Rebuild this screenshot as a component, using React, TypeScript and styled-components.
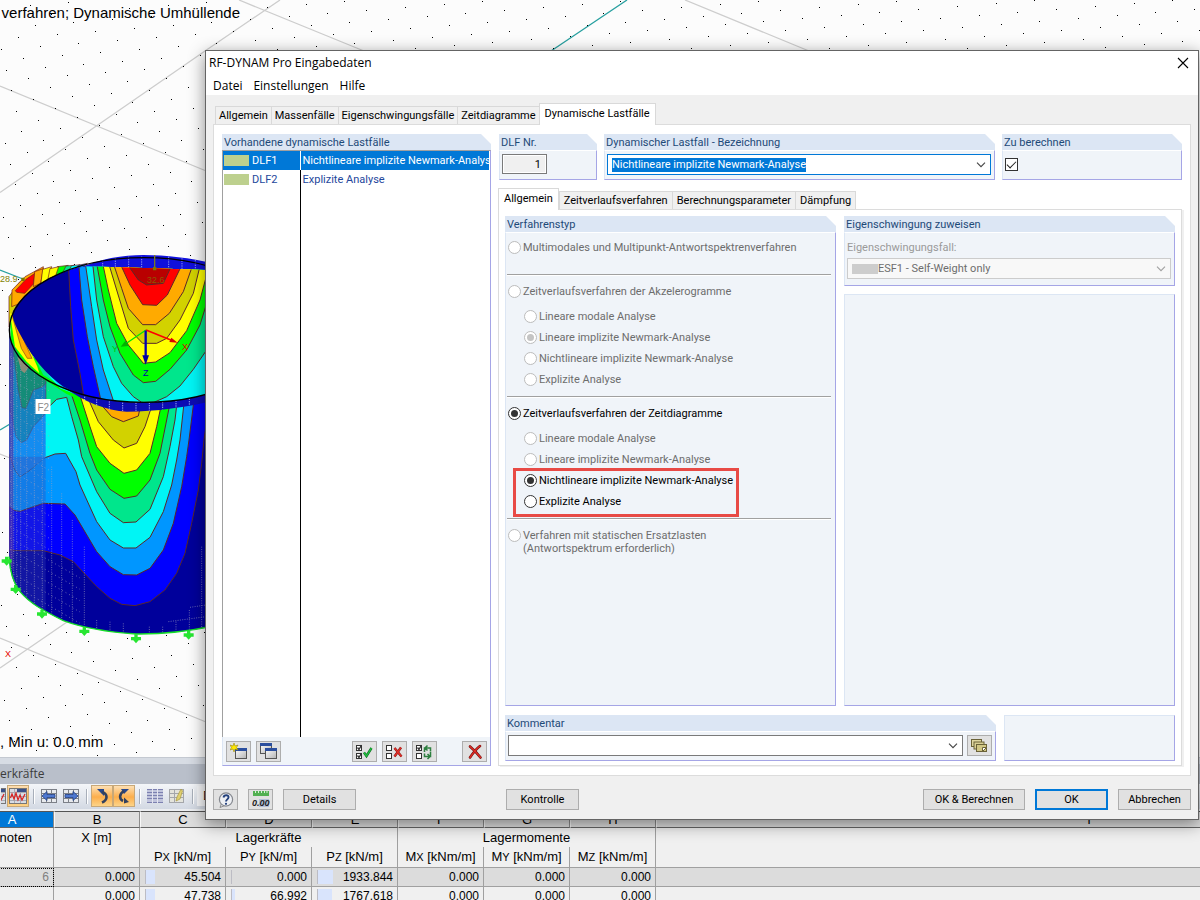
import React from "react";
import styled, { createGlobalStyle, css } from "styled-components";

const UI = `Roboto, "Open Sans", sans-serif`;
const ARIAL = `"Liberation Sans", Arial, sans-serif`;

const GlobalStyle = createGlobalStyle`
  *, *::before, *::after { box-sizing: border-box; }
  body { margin: 0; overflow: hidden; font-family: ${UI}; font-size: 11px; line-height: 13px; color: #000; }
  button, input, select { font: inherit; color: inherit; margin: 0; }
`;

/* ---------- main application ---------- */

const Desktop = styled.div`
  position: relative;
  display: flex;
  flex-direction: column;
  height: 100vh;
  min-height: 700px;
  overflow: hidden;
  background: #f0f0f0;
`;

const Viewport = styled.main`
  position: relative;
  flex: 1;
  min-height: 0;
  overflow: hidden;
  background: #fcfcfc;
`;

const Scene = styled.svg`
  display: block;
`;

const Captions = styled.div`
  position: absolute;
  inset: 0;
  display: flex;
  flex-direction: column;
  justify-content: space-between;
  align-items: flex-start;
  padding: 3px 0 5px;
  font: 15px/20px ${ARIAL};
  white-space: nowrap;
`;

const TopCaption = styled.div`
  display: flex;
  justify-content: flex-end;
  width: 240px;
`;

const ResultPanel = styled.section`
  height: 143px;
  flex: none;
  overflow: hidden;
  border-top: 1px solid #c4c9d1;
`;

const PanelTitle = styled.h2`
  margin: 0;
  height: 26px;
  border-top: 6px solid #d7dce4;
  background: #b9bfca;
  font: 12px/19px "Open Sans", sans-serif;
  color: #3c3c3c;
  white-space: nowrap;
`;

const ToolStrip = styled.div`
  display: flex;
  align-items: center;
  height: 25px;
  padding-bottom: 1px;
  background: linear-gradient(#f4f6f9, #d3d9e3);
`;

const ToolButton = styled.button<{ $on?: boolean; $cut?: boolean }>`
  flex: none;
  display: flex;
  align-items: center;
  justify-content: ${(p) => (p.$cut ? "flex-end" : "center")};
  width: ${(p) => (p.$cut ? "7px" : "22px")};
  height: 22px;
  padding: 0;
  border: 1px solid ${(p) => (p.$on ? "#c8a878" : "transparent")};
  background: ${(p) => (p.$on ? "linear-gradient(#fde0b4, #fcae4c 55%, #fdd488)" : "none")};
  overflow: hidden;
  > svg { flex: none; }
`;

const Divider = styled.span`
  flex: none;
  width: 1px;
  height: 15px;
  margin: 0 4px;
  background: #a8afba;
  box-shadow: 1px 0 #fff;
`;

const StripField = styled.span`
  padding: 0 6px;
  width: 120px;
  background: #f7f8fa;
  font: 12px/20px "Open Sans", sans-serif;
`;

const SheetWrap = styled.div`
  border-top: 2px solid #eceef1;
`;

const Sheet = styled.table`
  margin-left: -30px;
  width: 1552px;
  table-layout: fixed;
  border-collapse: separate;
  border-spacing: 0;
  font: 13px/19px ${ARIAL};
`;

const LetterCell = styled.th<{ $active?: boolean }>`
  height: 17px;
  padding: 0;
  border: 1px solid #8c8c8c;
  border-left-color: #f8f8f8;
  border-top-color: #555;
  border-bottom-color: #666;
  background: ${(p) => (p.$active ? "#0078d7" : "#dedede")};
  color: ${(p) => (p.$active ? "#fff" : "#000")};
  font-weight: 400;
  line-height: 15px;
`;

const HeadCell = styled.th<{ $open?: boolean }>`
  height: 19px;
  padding: 0;
  border-right: 1px solid #a0a0a0;
  border-bottom: ${(p) => (p.$open ? "0" : "1px solid #a0a0a0")};
  background: #f0f0f0;
  font-weight: 400;
  vertical-align: top;
  white-space: nowrap;
`;

const Small = styled.span`
  font-size: 11px;
`;

const NumCell = styled.td<{ $shade?: boolean; $bar?: number; $mark?: boolean; $head?: boolean }>`
  height: 19px;
  padding: 0 4px 0 0;
  border-right: 1px solid #a0a0a0;
  border-bottom: 1px solid #a0a0a0;
  text-align: right;
  font-size: 12px;
  line-height: 18px;
  color: ${(p) => (p.$head ? "#808080" : "#000")};
  background-color: ${(p) => (p.$shade ? "#dcdcdc" : "#f0f0f0")};
  ${(p) =>
    p.$bar !== undefined &&
    css`
      background-image: linear-gradient(#bcbcc4, #bcbcc4), linear-gradient(#d9e4fc, #d9e4fc);
      background-size: 1px 14px, ${p.$bar}px 14px;
      background-position: 5px 2px, 6px 2px;
      background-repeat: no-repeat;
    `}
  ${(p) => p.$mark && css`outline: 1px dotted #000; outline-offset: -1px;`}
`;

/* ---------- dialog ---------- */

const Dialog = styled.div`
  position: absolute;
  top: 50px;
  left: 205px;
  right: 1px;
  bottom: 80px;
  display: flex;
  flex-direction: column;
  border: 1px solid #646464;
  background: #f0f0f0;
  box-shadow: 0 4px 16px rgba(0, 0, 0, 0.45);
`;

const TitleBar = styled.header`
  display: flex;
  align-items: center;
  justify-content: space-between;
  height: 24px;
  padding: 0 9px 0 3px;
  background: #fff;
  font: 12px/24px "Open Sans", sans-serif;
`;

const CloseButton = styled.button`
  display: flex;
  padding: 0;
  border: 0;
  background: none;
`;

const MenuBar = styled.nav`
  display: flex;
  gap: 11px;
  height: 20px;
  padding-left: 7px;
  background: #fff;
`;

const MenuItem = styled.button`
  height: 20px;
  padding: 2px 0 0;
  border: 0;
  background: none;
  font: 12px/18px "Open Sans", sans-serif;
`;

const Body = styled.div`
  flex: 1;
  min-height: 0;
  display: flex;
  flex-direction: column;
  padding: 8px 7px 0;
`;

const TabList = styled.div<{ $inner?: boolean }>`
  display: flex;
  align-items: flex-end;
  height: 21px;
  padding-left: ${(p) => (p.$inner ? "0" : "2px")};
`;

const Tab = styled.button<{ $active?: boolean; $roomy?: boolean }>`
  position: relative;
  height: 18px;
  padding: ${(p) => (p.$roomy ? "0 4px" : "0 3px")};
  border: 1px solid #d9d9d9;
  border-bottom: 0;
  border-right-width: 0;
  background: #f0f0f0;
  white-space: nowrap;
  &:last-child { border-right-width: 1px; }
  ${(p) =>
    p.$active &&
    css`
      height: 22px;
      margin-bottom: -1px;
      padding: 0 5px 2px;
      border-right-width: 1px;
      background: #fff;
    `}
`;

const OuterPage = styled.div`
  flex: 1;
  min-height: 0;
  display: flex;
  gap: 7px;
  padding: 9px 8px 9px 8px;
  border: 1px solid #dcdcdc;
  background: #fff;
`;

const Group = styled.section<{ $w?: string; $grow?: boolean }>`
  display: flex;
  flex-direction: column;
  flex: ${(p) => (p.$grow ? "1 1 0" : `0 0 ${p.$w ?? "auto"}`)};
  min-width: 0;
  min-height: 0;
`;

const GroupTitle = styled.h3`
  flex: none;
  margin: 0;
  height: 16px;
  padding-left: 2px;
  background: #dce6f4;
  clip-path: polygon(0 0, calc(100% - 10px) 0, 100% 10px, 100% 100%, 0 100%);
  font: 11px/17px ${UI};
  color: #1e4a78;
`;

const GroupBody = styled.div<{ $pad?: string }>`
  flex: 1;
  min-height: 0;
  padding: ${(p) => p.$pad ?? "4px 2px"};
  border: 1px solid #a5a5e6;
  border-top-color: #fff;
  border-left-color: #dce6f4;
  background: #f0f4f9;
`;

const EmptyBox = styled.div<{ $w?: string }>`
  flex: ${(p) => (p.$w ? `0 0 ${p.$w}` : "1")};
  border: 1px solid #a5a5e6;
  border-top-color: #dce6f4;
  border-left-color: #dce6f4;
  background: #f0f4f9;
`;

const CaseList = styled.div`
  flex: 1;
  min-height: 0;
  display: flex;
  border: 1px solid #a5a5e6;
  border-width: 1px 1px 0 1px;
  border-top-color: #a0a0a0;
  border-left-color: #a0a0a0;
  padding-right: 1px;
`;

const CaseTable = styled.table`
  width: 100%;
  height: 100%;
  table-layout: fixed;
  border-collapse: collapse;
  color: #23479c;
`;

const CaseRow = styled.tr<{ $selected?: boolean; $fill?: boolean }>`
  height: ${(p) => (p.$fill ? "auto" : "19px")};
  background: ${(p) => (p.$selected ? "#0078d7" : "transparent")};
  color: ${(p) => (p.$selected ? "#fff" : "inherit")};
  td { padding: 0 0 0 2px; white-space: nowrap; overflow: hidden; }
  td:first-child { padding-left: 1px; border-right: 1px solid ${(p) => (p.$selected ? "#fff" : "#000")}; }
`;

const CaseKey = styled.span`
  display: flex;
  align-items: center;
  gap: 3px;
  &::before { content: ""; width: 25px; height: 11px; background: #bdd08e; }
`;

const ListTools = styled.div`
  flex: none;
  display: flex;
  gap: 5px;
  height: 29px;
  padding: 4px 3px 3px;
  border: 1px solid #a5a5e6;
  border-top: 0;
  border-left-color: #dce6f4;
  background: #f0f4f9;
`;

const Spacer = styled.span<{ $grow?: number }>`
  flex: ${(p) => p.$grow ?? 1};
`;

const IconButton = styled.button`
  flex: none;
  display: flex;
  align-items: center;
  justify-content: center;
  width: 25px;
  height: 21px;
  padding: 0;
  border: 1px solid #adadad;
  background: #e1e1e1;
`;

const RightSide = styled.div`
  flex: 1;
  min-width: 0;
  display: flex;
  flex-direction: column;
`;

const TopRow = styled.div`
  display: flex;
  height: 46px;
  gap: 7px;
  padding: 0 0 0 1px;
  margin-bottom: 8px;
`;

const InnerPage = styled.div`
  flex: 1;
  min-height: 0;
  display: flex;
  flex-direction: column;
  gap: 9px;
  padding: 6px 6px 4px;
  border: 1px solid #dcdcdc;
  box-shadow: 2px 1px #f0f0f0;
`;

const Row = styled.div<{ $h?: string; $gap?: string }>`
  flex: ${(p) => (p.$h ? `0 0 ${p.$h}` : "1")};
  min-height: 0;
  display: flex;
  gap: ${(p) => p.$gap ?? "8px"};
`;

const Column = styled.div`
  flex: 1;
  min-width: 0;
  display: flex;
  flex-direction: column;
  gap: 8px;
`;

const NumberField = styled.input`
  display: block;
  width: 45px;
  height: 20px;
  padding: 0 5px;
  border: 1px solid #7a7a7a;
  box-shadow: inset 0 0 0 1px #fff;
  background: #f0f0f0;
  text-align: right;
`;

const Combo = styled.div<{ $tone: "focus" | "plain" | "off" }>`
  position: relative;
  flex: 1;
  display: flex;
  align-items: center;
  height: 21px;
  padding: 0 4px;
  border: 1px solid ${(p) => ({ focus: "#0078d7", plain: "#7a7a7a", off: "#cccccc" })[p.$tone]};
  background: ${(p) => (p.$tone === "off" ? "#f8f8f8" : "#fff")};
  color: ${(p) => (p.$tone === "off" ? "#6d6d6d" : "#000")};
  > svg { position: absolute; right: 4px; top: 7px; pointer-events: none; }
`;

const ComboInput = styled.input`
  field-sizing: content;
  height: 14px;
  padding: 0;
  border: 0;
  outline: 0;
  background: #0078d7;
  color: #fff;
`;

const ComboSelect = styled.select`
  flex: 1;
  height: 19px;
  padding: 0;
  border: 0;
  outline: 0;
  opacity: 1;
  appearance: none;
  background: none;
  color: inherit;
`;

const Swatch = styled.span`
  width: 26px;
  height: 10px;
  background: #cdcdcd;
`;

const FieldLabel = styled.label`
  display: block;
  height: 21px;
  line-height: 21px;
  color: #9a9a9a;
`;

const Check = styled.input`
  display: block;
  appearance: none;
  width: 13px;
  height: 13px;
  border: 1px solid #333;
  background: #fff;
  &:checked::before {
    content: "";
    display: block;
    width: 9px;
    height: 5px;
    margin: 2px 1px;
    border: solid #222;
    border-width: 0 0 1px 1px;
    transform: rotate(-45deg);
  }
`;

const RadioLabel = styled.label<{ $sub?: boolean; $off?: boolean }>`
  display: flex;
  align-items: flex-start;
  gap: 2px;
  min-height: 21px;
  padding: 4px 0 4px ${(p) => (p.$sub ? "17px" : "1px")};
  color: ${(p) => (p.$off ? "#6d6d6d" : "#000")};
`;

const Radio = styled.input`
  flex: none;
  display: grid;
  place-items: center;
  appearance: none;
  width: 13px;
  height: 13px;
  border: 1px solid #333;
  border-radius: 50%;
  background: #fff;
  &:checked::before { content: ""; width: 7px; height: 7px; border-radius: 50%; background: #333; }
  &:disabled { border-color: #bcbcbc; }
  &:disabled:checked::before { background: #c4c4c4; }
`;

const SubList = styled.div`
  margin-top: 4px;
`;

const Rule = styled.hr<{ $far?: boolean }>`
  height: 2px;
  margin: ${(p) => (p.$far ? "16px" : "6px")} 1px 5px 0;
  border: 0;
  border-top: 1px solid #a0a0a0;
  background: #fff;
`;

const Highlight = styled.div`
  position: relative;
  &::after {
    content: "";
    position: absolute;
    top: -2px;
    bottom: -5px;
    left: 6px;
    width: 226px;
    border: 3px solid #e84a45;
    pointer-events: none;
  }
`;

const Footer = styled.footer`
  display: flex;
  align-items: center;
  height: 43px;
  padding: 4px 0 0;
`;

const PushButton = styled.button<{ $w: number; $default?: boolean }>`
  width: ${(p) => p.$w}px;
  height: 21px;
  padding: 0;
  border: ${(p) => (p.$default ? "2px solid #0078d7" : "1px solid #adadad")};
  background: #e1e1e1;
`;

const FootGroup = styled.div<{ $basis?: string; $gap: string }>`
  display: flex;
  flex: ${(p) => (p.$basis ? `0 0 ${p.$basis}` : "none")};
  gap: ${(p) => p.$gap};
`;

/* ---------- icons ---------- */

const Chevron = ({ off }: { off?: boolean }) => (
  <svg width="10" height="6" viewBox="0 0 10 6" fill="none" stroke={off ? "#a0a0a0" : "#444"} strokeWidth="1.1">
    <path d="M1 .7 5 4.7 9 .7" />
  </svg>
);

const Win = ({ x, y, w, h }: { x: number; y: number; w: number; h: number }) => (
  <g>
    <rect x={x + 0.5} y={y + 0.5} width={w} height={h} fill="url(#winFill)" stroke="#555" />
    <rect x={x} y={y} width={w + 1} height="3" fill="#2c4f9e" />
  </g>
);

const NewIcon = () => (
  <svg width="18" height="17" viewBox="0 0 18 17">
    <defs>
      <linearGradient id="winFill" x2="1" y2="1">
        <stop stopColor="#fff" />
        <stop offset="1" stopColor="#b4b4b4" />
      </linearGradient>
    </defs>
    <Win x={5} y={5} w={11} h={10} />
    <path d="M4 0 5 3 8 2 6.500 4.500 8 7 5 6 4 9 3 6 0 7 1.500 4.500 0 2 3 3z" fill="#ffe800" stroke="#9a8a10" strokeWidth=".6" />
  </svg>
);

const CopyIcon = () => (
  <svg width="18" height="17" viewBox="0 0 18 17">
    <Win x={0} y={0} w={11} h={10} />
    <Win x={5} y={5} w={11} h={10} />
  </svg>
);

const Boxes = ({ a, b }: { a?: boolean; b?: boolean }) => (
  <g fill="#fff" stroke="#333">
    <rect x=".5" y="1.500" width="5" height="5" />
    <rect x=".5" y="9.500" width="5" height="5" />
    {a && <path d="M1.500 3.500 3 5.500 5.500 1" fill="none" strokeWidth="1.300" />}
    {b && <path d="M1.500 11.500 3 13.500 5.500 9" fill="none" strokeWidth="1.300" />}
  </g>
);

const CheckAllIcon = () => (
  <svg width="17" height="16" viewBox="0 0 17 16">
    <Boxes a b />
    <path d="M8 8.500 10.500 12 15.500 4" fill="none" stroke="#0c6b20" strokeWidth="2.400" />
    <path d="M8 8.500 10.500 12 15.500 4" fill="none" stroke="#23c040" strokeWidth="1.400" />
  </svg>
);

const UncheckIcon = () => (
  <svg width="17" height="16" viewBox="0 0 17 16">
    <Boxes />
    <path d="M8.500 4 15.500 12.500M15 3.500 8.500 12.500" fill="none" stroke="#7a1414" strokeWidth="2.400" />
    <path d="M8.500 4 15.500 12.500M15 3.500 8.500 12.500" fill="none" stroke="#e03028" strokeWidth="1.500" />
  </svg>
);

const InvertIcon = () => (
  <svg width="17" height="16" viewBox="0 0 17 16">
    <Boxes a />
    <g fill="none" stroke="#2e8040" strokeWidth="1.500">
      <path d="M8.500 8V4H14.500V7.500M11.500 1.500 9 4 11.500 6.500" />
      <path d="M14.500 8V12.500H8.500V9.500M11.500 10 14 12.500 11.500 15" />
    </g>
  </svg>
);

const DeleteIcon = () => (
  <svg width="16" height="16" viewBox="0 0 16 16" fill="none" strokeLinecap="round">
    <path d="M3 2.500C6 5 10 9 13.500 13.500M13 2C9 5 6 9 3 13.500" stroke="#6e1010" strokeWidth="2.600" />
    <path d="M3 2.500C6 5 10 9 13.500 13.500M13 2C9 5 6 9 3 13.500" stroke="#e02c24" strokeWidth="1.500" />
  </svg>
);

const HelpIcon = () => (
  <svg width="16" height="16" viewBox="0 0 16 16">
    <path d="M3.500 11.500 2 15.500 7 13.500z" fill="#e8e8ec" stroke="#777" strokeWidth=".8" />
    <circle cx="8" cy="7.500" r="6.600" fill="#eef0f4" stroke="#85888f" strokeWidth="1.200" />
    <path d="M5.500 5.500C6 2.500 10.800 2.500 10.500 5.500 10.300 7.300 8 7.500 8 9.500" fill="none" stroke="#23407c" strokeWidth="1.900" />
    <circle cx="8" cy="11.800" r="1.100" fill="#23407c" />
  </svg>
);

const UnitsIcon = () => (
  <svg width="18" height="17" viewBox="0 0 18 17">
    <rect x="1" y="0" width="16" height="5" fill="#52b052" />
    <path d="M3.500 0v2M6.500 0v2M9.500 0v2M12.500 0v2M15 0v2" stroke="#d8f0d8" />
    <rect x="7" y="8" width="10" height="8" fill="#b4c0d8" />
    <text x="0" y="15" fontFamily="Liberation Sans, sans-serif" fontStyle="italic" fontWeight="700" fontSize="9" fill="#222">0.00</text>
  </svg>
);

const CardsIcon = () => (
  <svg width="17" height="14" viewBox="0 0 17 14" stroke="#6a6238">
    <rect x=".5" y=".5" width="10" height="7" fill="#ded6a0" />
    <rect x="3" y="3" width="10" height="7" fill="#d8cf94" />
    <rect x="5.500" y="5.500" width="10" height="7" fill="#d0c684" />
    <path d="M11.500 12.500v-4h4z" fill="#fff" />
  </svg>
);

const GridIcon = ({ arrow }: { arrow?: "left" | "right" }) => (
  <svg width="18" height="16" viewBox="0 0 18 16">
    <rect x="1" y="1" width="16" height="14" fill="#e8eaee" />
    <path d="M1 1.500h16M1 5.500h16M1 10.500h16M1 14.500h16M1.500 1v14M6.500 1v14M11.500 1v14M16.500 1v14" stroke="#7c8088" />
    {arrow && (
      <path
        d={arrow === "left" ? "M2 8 7 3.500V6.500H15V9.500H7V12.500z" : "M16 8 11 3.500V6.500H3V9.500H11V12.500z"}
        fill="#4e78d0"
        stroke="#203c80"
        strokeWidth=".8"
      />
    )}
  </svg>
);

const ChartIcon = () => (
  <svg width="18" height="16" viewBox="0 0 18 16">
    <rect x=".5" y=".5" width="17" height="15" fill="#d8dce4" stroke="#777" />
    <rect x="8" y="1" width="9" height="3" fill="#3a5088" />
    <path d="M1 4.500h16M1 8.500h16M1 12.500h16M5.500 1v14M11.500 4v11" stroke="#a8acb4" />
    <path d="M1.500 10 3 6 5 11 7 5 9 12 11 7 13 12 16 6" fill="none" stroke="#d82020" strokeWidth="1.200" />
  </svg>
);

const HookIcon = ({ flip }: { flip?: boolean }) => (
  <svg width="16" height="16" viewBox="0 0 16 16">
    {flip ? (
      <>
        <path d="M5 1 13 1 8 6z" fill="#26468c" />
        <path d="M8 3C3 6 3 11 7 13" fill="none" stroke="#33415e" strokeWidth="2.600" />
        <path d="M8 9.500V15.500L13 14z" fill="#33415e" />
      </>
    ) : (
      <>
        <path d="M3 1h7v7z" fill="#26468c" />
        <path d="M8 4C14 6 14 12 8 14.500" fill="none" stroke="#33415e" strokeWidth="2.600" />
      </>
    )}
  </svg>
);

const ListIcon = () => (
  <svg width="18" height="16" viewBox="0 0 18 16">
    <rect x="1" y="1" width="16" height="14" fill="#c0c4dc" />
    <path d="M1 1.500h16M1 4.500h16M1 7.500h16M1 10.500h16M1 14.500h16" stroke="#7c80b0" />
    <path d="M6.500 1v14M11.500 1v14" stroke="#e4e4f0" />
  </svg>
);

const NoteIcon = () => (
  <svg width="18" height="16" viewBox="0 0 18 16">
    <rect x="1" y="1" width="15" height="14" fill="#e4e4dc" />
    <path d="M1 1.500h15M1 5.500h15M1 9.500h15M1 14.500h15M1.500 1v14M6.500 1v14M15.500 1v14" stroke="#a4a6aa" />
    <path d="M13 1 14.500 3 12 11 8 13 9 9z" fill="#e0d070" stroke="#a89840" strokeWidth=".7" />
  </svg>
);

/* ---------- 3D scene ---------- */

const gridDots = (() => {
  let d = "";
  for (let i = -60; i < 90; i++) {
    for (let j = -60; j < 60; j++) {
      const x = Math.round(1 + i * 21.9 + j * 16.8);
      const y = Math.round(49 + i * 8.8 - j * 11.8);
      if (x >= 0 && x < 1200 && y >= 0 && y < 757 && (x < 206 || y < 51)) d += `M${x} ${y}h1v1h-1z`;
    }
  }
  return d;
})();

const C = {
  navy: "#00009b",
  blue: "#0000ff",
  sky: "#0096ff",
  cyan: "#00f5f5",
  sea: "#00e68c",
  green: "#00ff00",
  yellow: "#ffff00",
  olive: "#d2d200",
  orange: "#ffaa00",
  red: "#ff0000",
  dark: "#b90000",
};

const OUTER: [string, string][] = [
  [C.blue, "M27 930 60 932 130 932 180 945 220 965 290 1040 330 1075 365 1093 405 1097 450 1085 495 1050 530 1000 555 940 575 850 595 750 605 670 612 600 630 470V380H27z"],
  [C.sky, "M27 800 45 812 60 814 130 790 195 792 225 825 290 935 330 980 370 1004 410 1005 450 985 490 930 520 850 545 740 560 650 567 600 582 480V380H27z"],
  [C.cyan, "M27 640 45 690 60 710 90 690 130 655 165 642 197 640 228 695 240 735 290 845 330 900 370 924 408 924 450 892 490 815 515 735 530 660 540 600 553 480V380H27z"],
  [C.sea, "M137 510 170 478 200 472 215 530 235 600 245 650 290 755 330 820 370 848 408 846 450 808 490 710 510 620 525 540 532 480V380H137z"],
  [C.green, "M210 450 240 540 270 640 290 690 330 748 372 775 410 768 450 720 480 640 500 540 512 480V380H210z"],
  [C.yellow, "M238 460 270 560 290 620 330 670 372 700 410 690 450 640 470 560 487 480V380H238z"],
  [C.olive, "M262 470 295 545 340 600 372 624 410 610 435 560 458 490V380H262z"],
  [C.orange, "M300 490 335 530 370 545 415 528 422 495V400H300z"],
];

const INNER: [string, string][] = [
  [C.blue, "M205 70 212 200 220 300 240 400 255 490H640V70z"],
  [C.sky, "M236 70 245 180 262 290 280 380 306 495H640V70z"],
  [C.cyan, "M256 70 275 200 290 300 310 390 346 500H640V70z"],
  [C.sea, "M278 70 290 180 310 290 340 380 365 430 400 470 425 487H462L500 470 540 438 580 388 620 330V70z"],
  [C.green, "M290 70 310 180 330 260 360 340 400 405 430 428 467 424 510 388 560 330 600 255 620 190V70z"],
  [C.yellow, "M308 70 325 150 350 250 385 315 430 370 467 366 510 338 560 272 600 180 620 105V70z"],
  [C.olive, "M326 70 350 150 385 265 428 310 470 310 500 295 540 240 580 160 602 70z"],
  [C.orange, "M340 70 365 145 385 205 428 254 467 254 508 220 550 155 580 70z"],
  [C.red, "M360 70 390 135 428 194 470 196 502 165 548 70z"],
  [C.dark, "M380 70 415 120 440 135 490 130 518 70z"],
];

const EDGE: [string, string][] = [
  [C.olive, "M27 260 27 170 60 125 90 140 60 200z"],
  [C.orange, "M35 200 36 150 75 110 130 80V150L60 190z"],
  [C.red, "M46 152 78 118 106 99 100 132 74 160 50 157z"],
  [C.orange, "M104 95 130 86 122 130 100 140z"],
  [C.yellow, "M128 88 155 80 145 125 122 135z"],
  [C.green, "M172 80 205 76 180 110 160 118z"],
  [C.yellow, "M150 86 176 80 164 116 142 126z"],
  [C.sea, "M198 78 222 76 205 100 182 110z"],
  [C.cyan, "M215 77 240 74 225 92 200 102z"],
  [C.sky, "M235 76 262 70 245 84 222 93z"],
];

const SUPPORTS = [[20, 965], [47, 1050], [126, 1124], [253, 1176], [408, 1198], [566, 1187]];
const MESH = [34, 41, 50, 62, 80, 103, 127, 155, 185, 217, 253];

const BODY =
  "M27 265V950C30 1000 40 1030 60 1055 90 1090 126 1110 190 1142 250 1164 330 1177 408 1182 490 1183 560 1175 640 1158V440L618 465C560 480 500 488 430 487 300 485 200 450 130 405 80 370 27 320 27 265z";

const Tank = () => (
  <g transform="translate(0 240) scale(.33333)" strokeLinejoin="round">
    <defs>
      <clipPath id="body"><path d={BODY} /></clipPath>
      <clipPath id="opening">
        <path d="M38 215C60 170 110 135 150 113 200 92 230 82 262 79L618 90H640V465L618 463C560 480 500 487 432 487 340 486 260 478 190 440 140 405 95 350 70 300 50 265 36 240 38 215z" />
      </clipPath>
    </defs>

    <path d="M230 88C300 55 370 45 430 45 500 45 570 54 640 70V96L262 82z" fill="#1010dc" />
    <path d="M308 62v18M346 55v25M386 50v32M425 50v33M506 50v35M546 55v32M586 60v30" stroke="#8c96f0" strokeWidth="3" strokeDasharray="4 3" />

    <g stroke="#6e1818" strokeWidth="2">
      {EDGE.map(([fill, d], i) => <path key={i} d={d} fill={fill} />)}
    </g>

    <g clipPath="url(#body)">
      <rect x="0" y="200" width="640" height="1000" fill={C.navy} />
      <g stroke="#5a2828" strokeWidth="3">
        {OUTER.map(([fill, d], i) => <path key={i} d={d} fill={fill} />)}
      </g>
      <path d="M27 400H137V652L90 690 60 710 45 690 27 640z" fill="#148cf0" />
      <path d="M27 260H137V520L100 560 80 600 64 608 48 590 38 540 27 500z" fill="#1482be" stroke="#50508c" strokeWidth="2" />
      <path d="M27 260H137V430L128 440 100 450 78 505 66 503 55 450 42 350z" fill="#148c78" stroke="#50506e" strokeWidth="2" />
      <path d="M52 350 88 378 74 400 64 392z" fill="#8c8c78" />
      <path d="M27 260H40V1000L27 960z" fill="#5038a8" opacity=".7" />
      <path d="M40 650H137V1120H40z" fill="#3c46b4" opacity=".32" />
      <g stroke="#a0a0be" strokeWidth="2.500" strokeDasharray="3 4" opacity=".75">
        {MESH.map((x, i) => <path key={x} d={`M${x} ${i < 7 ? 340 + i * 12 : 600 + (i - 6) * 80}V1170`} />)}
        {Array.from({ length: 22 }, (_, i) => (
          <path key={i} d={`M30 ${350 + i * 34} ${i > 15 ? 240 : 150} ${(i > 15 ? 470 : 420) + i * 34}`} fill="none" strokeDasharray="3 9" />
        ))}
        <path d="M290 1140v40M330 1145v35M370 1150v30M448 1160v20M488 1160v20M528 1145v30M568 1110v65M605 920v250M505 1145 618 1130M570 1102 618 1095" fill="none" />
      </g>
    </g>
    <path d="M27 950C30 1000 40 1030 60 1055 90 1090 126 1110 190 1142 250 1164 330 1177 408 1182 490 1183 560 1175 640 1158" fill="none" stroke="#14dc28" strokeWidth="4" />

    <path d="M30 230 42 225 100 350 200 440 240 480 200 462 120 410 60 350 32 300z" fill={C.green} />
    <path d="M30 220 42 225 90 330 112 380 118 400 80 365 45 320z" fill={C.yellow} />
    <path d="M36 225 46 240 80 320 96 355 82 355 64 325z" fill={C.orange} stroke="#8c4614" strokeWidth="2" />
    <path d="M110 365 150 405 170 430 130 405z" fill={C.sea} />
    <path d="M140 400 190 437 240 468 180 445z" fill={C.cyan} />

    <g clipPath="url(#opening)">
      <rect x="20" y="60" width="620" height="440" fill={C.navy} />
      <g stroke="#5a2828" strokeWidth="3">
        {INNER.map(([fill, d], i) => <path key={i} d={d} fill={fill} />)}
      </g>
    </g>

    <path d="M190 440C260 474 340 488 432 487 500 487 560 480 640 460V482C560 502 470 514 380 515 320 512 250 485 190 440z" fill="#0c0cb4" />
    <path d="M254 470v15M290 478v22M328 484v25M368 488v26M408 488v26M448 488v24M488 486v22M528 482v22M568 476v20" stroke="#a0aaf0" strokeWidth="3" strokeDasharray="4 3" />
    <ellipse cx="432" cy="270" rx="404" ry="217" fill="none" stroke="#000" strokeWidth="4" />

    {SUPPORTS.map(([x, y]) => (
      <path key={x} d={`M${x - 5} ${y - 15}h10v8h10v10h-7l-8 9-8-9h-7v-10h10z`} fill="#28e632" />
    ))}

    <path d="M464 45v40" stroke="#787828" strokeWidth="4" />
    <path d="M459 81h10v10h-10zM64 113h10v10H64z" fill="#787800" />
    <path d="M438 270 376 312" stroke="#00e600" strokeWidth="4" />
    <path d="M362 320 376 302 386 318z" fill="#00b400" />
    <path d="M438 270 518 302" stroke="#ff0000" strokeWidth="5" />
    <path d="M533 308 508 306 514 293z" fill="#dc0000" />
    <path d="M437 272V350" stroke="#0000b4" strokeWidth="7" />
    <path d="M427 346H447L437 374z" fill="#0000a0" />
  </g>
);

const SceneView = () => (
  <Scene width="1200" height="757" viewBox="0 0 1200 757" aria-label="Verformung des Tanks">
    <g fill="none" stroke="#cdcdcd" strokeWidth="1.300">
      <path d="M0 86 205 170.500M0 192.500 205 51 280 0M239 0 364 51M685 0 809 51M0 638 206 722M0 668 67 622M0 454 10 458" />
      <path d="M627 0 551 51M0 270 23 279 40 285M0 430 10 424" stroke="#28a0a0" />
    </g>
    <path d={gridDots} fill="#000" shapeRendering="crispEdges" />
    <Tank />
    <g fontFamily="Liberation Sans, sans-serif" fontSize="9">
      <text x="0" y="282" fill="#828200">28.9</text>
      <text x="147" y="283" fill="#8c5a00">32.6</text>
      <text x="182" y="350" fill="#e60000">X</text>
      <text x="143" y="376" fill="#0000aa">Z</text>
      <text x="112" y="352" fill="#00c800">Y</text>
      <text x="5" y="657" fill="#e60000">X</text>
      <rect x="35.500" y="399" width="15" height="15" fill="#fff" />
      <text x="37.500" y="410.500" fontSize="10" fill="#8c8c8c">F2</text>
    </g>
  </Scene>
);

/* ---------- result table ---------- */

const LETTERS = ["A", "B", "C", "D", "E", "F", "G", "H", "I"];
const FORCES = [["P", "X", "[kN/m]"], ["P", "Y", "[kN/m]"], ["P", "Z", "[kN/m]"], ["M", "X", "[kNm/m]"], ["M", "Y", "[kNm/m]"], ["M", "Z", "[kNm/m]"]];
const ROWS = [
  { node: "6", x: "0.000", values: ["45.504", "0.000", "1933.844", "0.000", "0.000", "0.000"], bars: [9, 0, 15] },
  { node: "", x: "0.000", values: ["47.738", "66.992", "1767.618", "0.000", "0.000", "0.000"], bars: [9, 3, 14] },
];

const ResultSheet = () => (
  <SheetWrap>
    <Sheet>
      <colgroup>
        <col width="84" />
        {LETTERS.slice(1, 8).map((l) => <col key={l} width="86" />)}
        <col />
      </colgroup>
      <thead>
        <tr>{LETTERS.map((l) => <LetterCell key={l} $active={l === "A"}>{l}</LetterCell>)}</tr>
        <tr>
          <HeadCell rowSpan={2}>Knoten</HeadCell>
          <HeadCell rowSpan={2}>X [m]</HeadCell>
          <HeadCell colSpan={3} $open>Lagerkräfte</HeadCell>
          <HeadCell colSpan={3} $open>Lagermomente</HeadCell>
          <HeadCell rowSpan={2} />
        </tr>
        <tr>
          {FORCES.map(([a, b, c]) => (
            <HeadCell key={a + b}>{a}<Small>{b}</Small> {c}</HeadCell>
          ))}
        </tr>
      </thead>
      <tbody>
        {ROWS.map((r, i) => (
          <tr key={i}>
            <NumCell $shade={i === 0} $mark={i === 0} $head>{r.node}</NumCell>
            <NumCell $shade={i === 0}>{r.x}</NumCell>
            {r.values.map((v, k) => <NumCell key={k} $shade={i === 0} $bar={r.bars[k]}>{v}</NumCell>)}
            <NumCell $shade={i === 0} />
          </tr>
        ))}
      </tbody>
    </Sheet>
  </SheetWrap>
);

/* ---------- dialog parts ---------- */

type Option = { label: React.ReactNode; name: string; sub?: boolean; off?: boolean; on?: boolean };

const RadioOption = ({ label, name, sub, off, on }: Option) => (
  <RadioLabel $sub={sub} $off={off}>
    <Radio type="radio" name={name} disabled={off} defaultChecked={on} />
    <span>{label}</span>
  </RadioLabel>
);

const MethodGroup = () => (
  <Group $grow>
    <GroupTitle>Verfahrenstyp</GroupTitle>
    <GroupBody $pad="4px 3px 0 1px">
      <RadioOption name="method" off label="Multimodales und Multipunkt-Antwortspektrenverfahren" />
      <Rule $far />
      <RadioOption name="method" off label="Zeitverlaufsverfahren der Akzelerogramme" />
      <SubList>
        <RadioOption sub off name="accel" label="Lineare modale Analyse" />
        <RadioOption sub off on name="accel" label="Lineare implizite Newmark-Analyse" />
        <RadioOption sub off name="accel" label="Nichtlineare implizite Newmark-Analyse" />
        <RadioOption sub off name="accel" label="Explizite Analyse" />
      </SubList>
      <Rule />
      <RadioOption name="method" on label="Zeitverlaufsverfahren der Zeitdiagramme" />
      <SubList>
        <RadioOption sub off name="time" label="Lineare modale Analyse" />
        <RadioOption sub off name="time" label="Lineare implizite Newmark-Analyse" />
        <Highlight>
          <RadioOption sub on name="time" label="Nichtlineare implizite Newmark-Analyse" />
          <RadioOption sub name="time" label="Explizite Analyse" />
        </Highlight>
      </SubList>
      <Rule />
      <RadioOption name="method" off label={<>Verfahren mit statischen Ersatzlasten<br />(Antwortspektrum erforderlich)</>} />
    </GroupBody>
  </Group>
);

const CasePanel = () => (
  <Group $w="269px">
    <GroupTitle>Vorhandene dynamische Lastfälle</GroupTitle>
    <CaseList>
      <CaseTable>
        <colgroup><col width="77" /><col /></colgroup>
        <tbody>
          <CaseRow $selected><td><CaseKey>DLF1</CaseKey></td><td>Nichtlineare implizite Newmark-Analys</td></CaseRow>
          <CaseRow><td><CaseKey>DLF2</CaseKey></td><td>Explizite Analyse</td></CaseRow>
          <CaseRow $fill><td /><td /></CaseRow>
        </tbody>
      </CaseTable>
    </CaseList>
    <ListTools>
      <IconButton aria-label="Neu"><NewIcon /></IconButton>
      <IconButton aria-label="Kopieren"><CopyIcon /></IconButton>
      <Spacer $grow={4} />
      <IconButton aria-label="Alle auswählen"><CheckAllIcon /></IconButton>
      <IconButton aria-label="Auswahl aufheben"><UncheckIcon /></IconButton>
      <IconButton aria-label="Auswahl umkehren"><InvertIcon /></IconButton>
      <Spacer />
      <IconButton aria-label="Löschen"><DeleteIcon /></IconButton>
    </ListTools>
  </Group>
);

export default function App() {
  return (
    <Desktop>
      <GlobalStyle />
      <Viewport>
        <SceneView />
        <Captions>
          <TopCaption>verfahren; Dynamische Umhüllende</TopCaption>
          <span>, Min u: 0.0 mm</span>
        </Captions>
      </Viewport>
      <ResultPanel>
        <PanelTitle>erkräfte</PanelTitle>
        <ToolStrip>
          <ToolButton $cut aria-label="Diagramm"><ChartIcon /></ToolButton>
          <ToolButton $on aria-label="Verlauf"><ChartIcon /></ToolButton>
          <Divider />
          <ToolButton aria-label="Zurück"><GridIcon arrow="left" /></ToolButton>
          <ToolButton aria-label="Weiter"><GridIcon arrow="right" /></ToolButton>
          <Divider />
          <ToolButton $on aria-label="Auswahl folgen"><HookIcon /></ToolButton>
          <ToolButton $on aria-label="Auswahl zeigen"><HookIcon flip /></ToolButton>
          <Divider />
          <ToolButton aria-label="Liste"><ListIcon /></ToolButton>
          <ToolButton aria-label="Bearbeiten"><NoteIcon /></ToolButton>
          <Divider />
          <StripField>D</StripField>
        </ToolStrip>
        <ResultSheet />
      </ResultPanel>

      <Dialog role="dialog" aria-label="RF-DYNAM Pro Eingabedaten">
        <TitleBar>
          <span>RF-DYNAM Pro Eingabedaten</span>
          <CloseButton aria-label="Schließen">
            <svg width="12" height="12" viewBox="0 0 12 12" stroke="#000" strokeWidth="1.100"><path d="M1 1 11 11M11 1 1 11" /></svg>
          </CloseButton>
        </TitleBar>
        <MenuBar>
          <MenuItem>Datei</MenuItem>
          <MenuItem>Einstellungen</MenuItem>
          <MenuItem>Hilfe</MenuItem>
        </MenuBar>
        <Body>
          <TabList>
            <Tab>Allgemein</Tab>
            <Tab>Massenfälle</Tab>
            <Tab>Eigenschwingungsfälle</Tab>
            <Tab>Zeitdiagramme</Tab>
            <Tab $active>Dynamische Lastfälle</Tab>
          </TabList>
          <OuterPage>
            <CasePanel />
            <RightSide>
              <TopRow>
                <Group $w="98px">
                  <GroupTitle id="dlf-no">DLF Nr.</GroupTitle>
                  <GroupBody $pad="3px 2px"><NumberField aria-labelledby="dlf-no" readOnly value="1" /></GroupBody>
                </Group>
                <Group $grow>
                  <GroupTitle id="dlf-name">Dynamischer Lastfall - Bezeichnung</GroupTitle>
                  <GroupBody $pad="3px 3px 3px 2px">
                    <Combo $tone="focus">
                      <ComboInput aria-labelledby="dlf-name" defaultValue="Nichtlineare implizite Newmark-Analyse" />
                      <Chevron />
                    </Combo>
                  </GroupBody>
                </Group>
                <Group $w="180px">
                  <GroupTitle id="calc">Zu berechnen</GroupTitle>
                  <GroupBody $pad="7px 2px"><Check type="checkbox" aria-labelledby="calc" defaultChecked /></GroupBody>
                </Group>
              </TopRow>
              <TabList $inner>
                <Tab $active>Allgemein</Tab>
                <Tab $roomy>Zeitverlaufsverfahren</Tab>
                <Tab $roomy>Berechnungsparameter</Tab>
                <Tab $roomy>Dämpfung</Tab>
              </TabList>
              <InnerPage>
                <Row>
                  <MethodGroup />
                  <Column>
                    <Group $w="70px">
                      <GroupTitle>Eigenschwingung zuweisen</GroupTitle>
                      <GroupBody $pad="4px 3px 0 2px">
                        <FieldLabel htmlFor="mode-case">Eigenschwingungsfall:</FieldLabel>
                        <Combo $tone="off">
                          <Swatch />
                          <ComboSelect id="mode-case" disabled><option>ESF1 - Self-Weight only</option></ComboSelect>
                          <Chevron off />
                        </Combo>
                      </GroupBody>
                    </Group>
                    <EmptyBox />
                  </Column>
                </Row>
                <Row $h="46px">
                  <Group $grow>
                    <GroupTitle id="comment">Kommentar</GroupTitle>
                    <GroupBody $pad="3px 3px 3px 2px">
                      <Row $gap="4px">
                        <Combo $tone="plain">
                          <ComboSelect aria-labelledby="comment"><option></option></ComboSelect>
                          <Chevron />
                        </Combo>
                        <IconButton aria-label="Vorlagen"><CardsIcon /></IconButton>
                      </Row>
                    </GroupBody>
                  </Group>
                  <EmptyBox $w="171px" />
                </Row>
              </InnerPage>
            </RightSide>
          </OuterPage>
          <Footer>
            <FootGroup $gap="10px" $basis="293px">
              <IconButton aria-label="Hilfe"><HelpIcon /></IconButton>
              <IconButton aria-label="Einheiten"><UnitsIcon /></IconButton>
              <PushButton $w={73}>Details</PushButton>
            </FootGroup>
            <PushButton $w={73}>Kontrolle</PushButton>
            <Spacer />
            <FootGroup $gap="10px">
              <PushButton $w={102}>OK &amp; Berechnen</PushButton>
              <PushButton $w={73} $default>OK</PushButton>
              <PushButton $w={73}>Abbrechen</PushButton>
            </FootGroup>
          </Footer>
        </Body>
      </Dialog>
    </Desktop>
  );
}
